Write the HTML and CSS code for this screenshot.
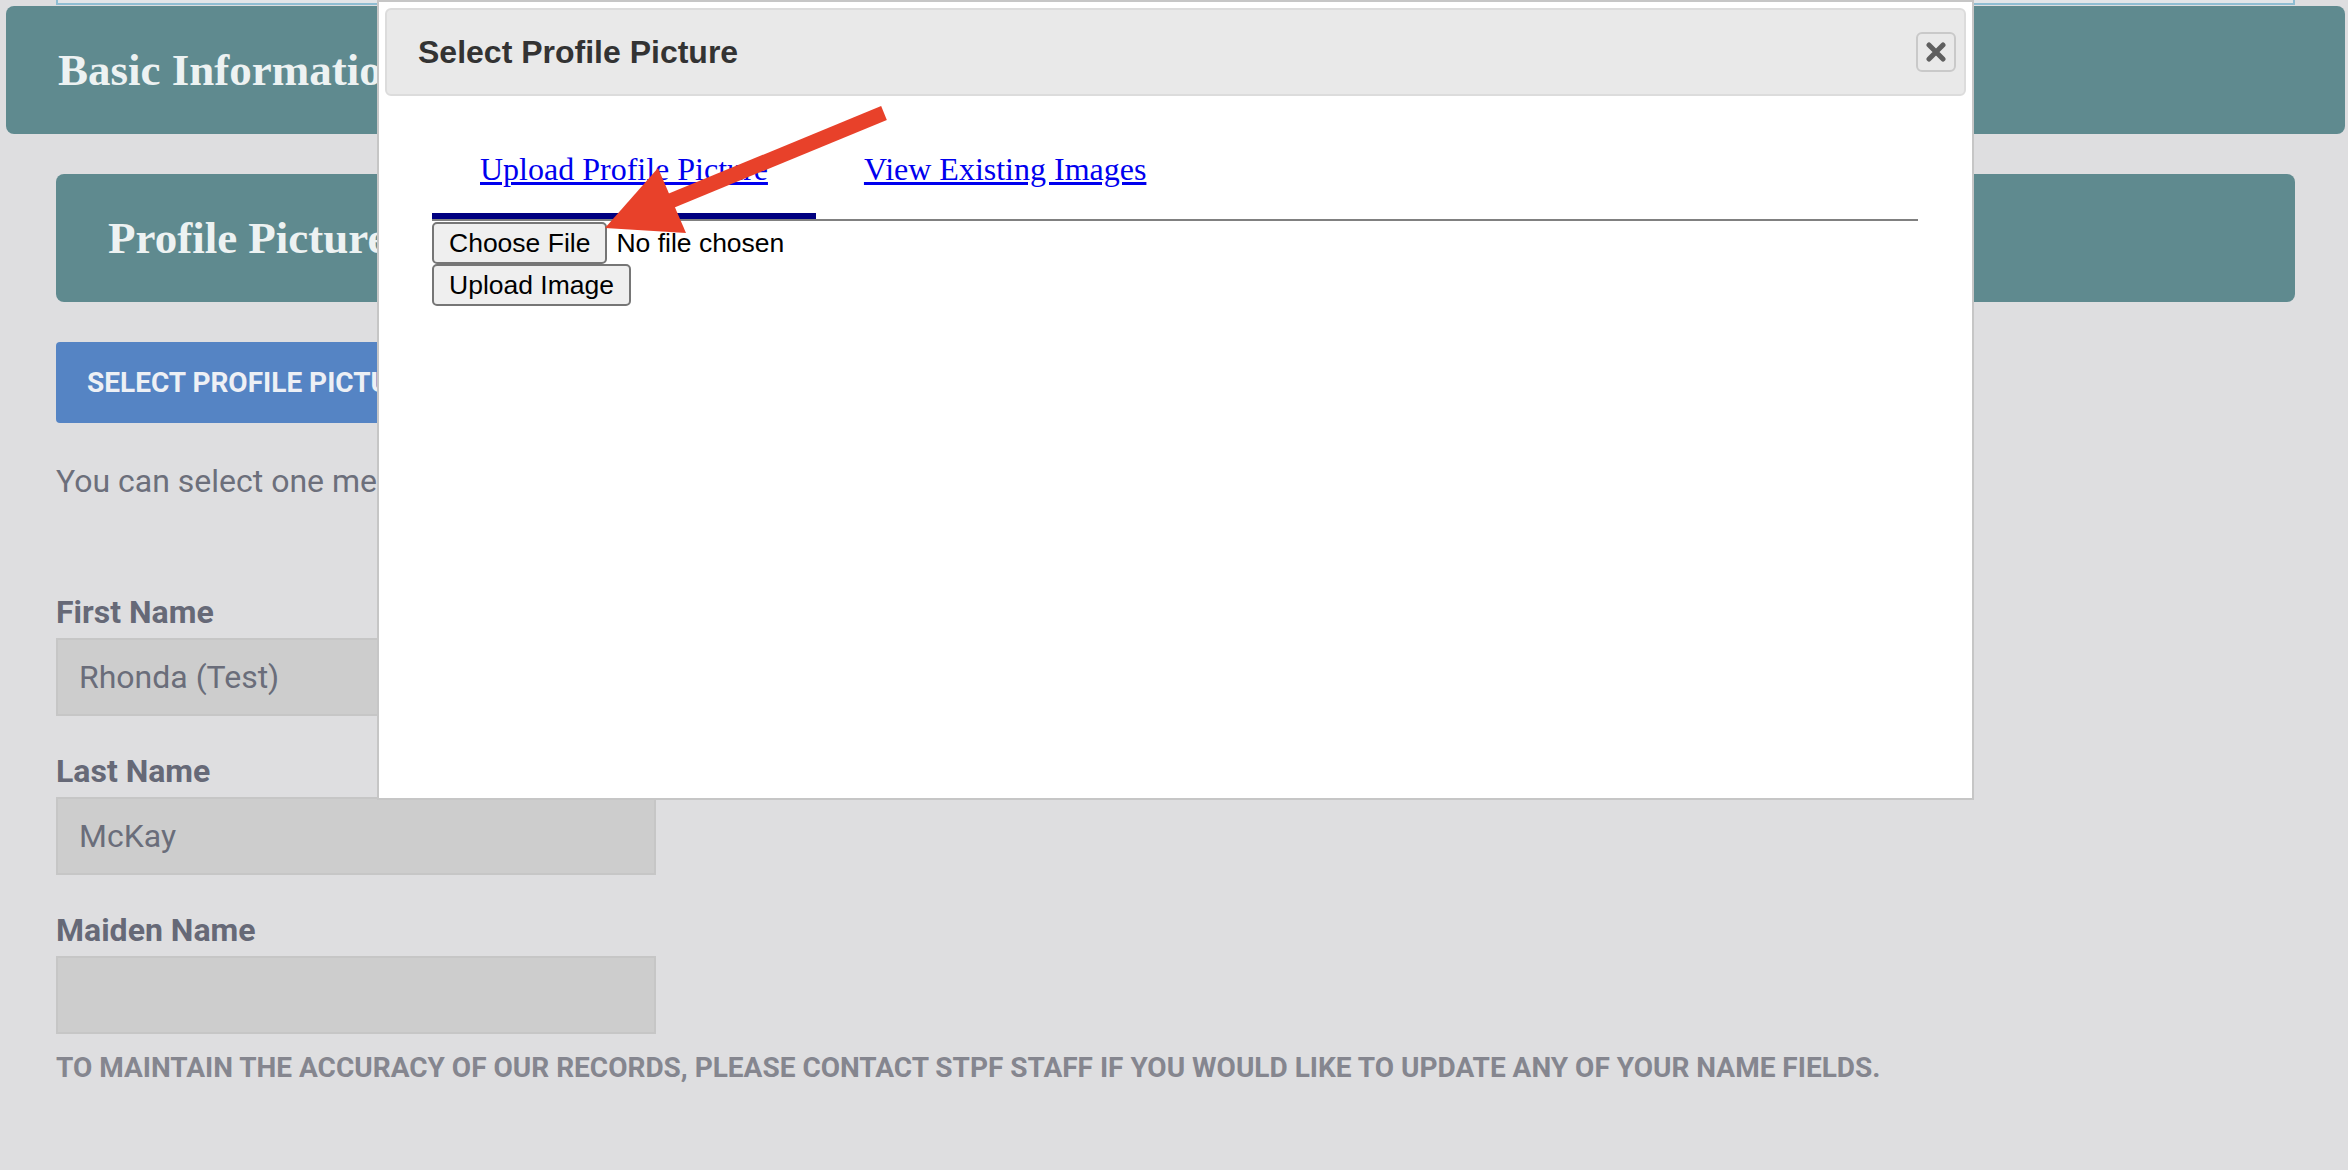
FILE: index.html
```html
<!DOCTYPE html>
<html lang="en">
<head>
<meta charset="utf-8">
<title>Select Profile Picture</title>
<link rel="stylesheet" href="styles.css">
</head>
<body>
<div class="page">
  <div class="topfield"></div>
  <div class="bar bar-basic"><h2 class="bar-title">Basic Information</h2></div>
  <div class="content">
    <div class="bar bar-profile"><h3 class="bar-title">Profile Picture</h3></div>
    <button class="select-btn" type="button">SELECT PROFILE PICTURE</button>
    <p class="hint">You can select one media file to use as your profile picture.</p>

    <div class="field">
      <label class="field-label">First Name</label>
      <div class="field-input">Rhonda (Test)</div>
    </div>
    <div class="field">
      <label class="field-label">Last Name</label>
      <div class="field-input">McKay</div>
    </div>
    <div class="field">
      <label class="field-label">Maiden Name</label>
      <div class="field-input"></div>
    </div>
    <p class="notice">TO MAINTAIN THE ACCURACY OF OUR RECORDS, PLEASE CONTACT STPF STAFF IF YOU WOULD LIKE TO UPDATE ANY OF YOUR NAME FIELDS.</p>
  </div>

  <div class="modal">
    <div class="modal-header">
      <span class="modal-title">Select Profile Picture</span>
      <button class="modal-close" type="button" aria-label="close">
        <svg width="22" height="20" viewBox="0 0 22 20"><path d="M4 3 L18 17 M18 3 L4 17" stroke="#505050" stroke-width="5" stroke-linecap="round" fill="none" opacity="0.9"/></svg>
      </button>
    </div>
    <div class="modal-body">
      <ul class="tabs">
        <li class="tab active"><a href="#">Upload Profile Picture</a></li>
        <li class="tab"><a href="#">View Existing Images</a></li>
      </ul>
      <div class="file-row">
        <button class="native-btn" type="button">Choose File</button>
        <span class="file-status">No file chosen</span>
      </div>
      <div class="upload-row">
        <button class="native-btn" type="button">Upload Image</button>
      </div>
    </div>
  </div>

  <svg class="annotation" width="2348" height="1170" viewBox="0 0 2348 1170">
    <line x1="884" y1="113" x2="668" y2="202" stroke="#e8412a" stroke-width="15"/>
    <polygon points="605,228 658,168 686,233" fill="#e8412a"/>
  </svg>
</div>
</body>
</html>
```

FILE: styles.css
```css
* { box-sizing: border-box; }

html, body {
  margin: 0;
  padding: 0;
}

body {
  background: #dedee0;
  font-family: Roboto, "Liberation Sans", sans-serif;
  width: 2348px;
  height: 1170px;
  overflow: hidden;
}

.page {
  position: relative;
  width: 2348px;
  height: 1170px;
}

.topfield {
  margin: 0 53px 0 56px;
  height: 5px;
  background: #e2e5e8;
  border: 2px solid #8fbdd2;
  border-top: 0;
}

.bar {
  background: #5f8a8f;
  border-radius: 8px;
  height: 128px;
  display: flex;
  align-items: center;
}

.bar-basic {
  margin: 1px 3px 0 6px;
  padding-left: 52px;
}

.bar-title {
  margin: 0;
  font-family: "Liberation Serif", "Times New Roman", serif;
  font-weight: 700;
  font-size: 45px;
  color: #edf2f2;
}

.content {
  padding: 40px 53px 0 56px;
}

.bar-profile {
  padding-left: 52px;
}

.select-btn {
  display: flex;
  align-items: center;
  margin-top: 40px;
  height: 81px;
  padding: 0 31px;
  border: 0;
  border-radius: 4px;
  background: #5584c4;
  color: #edf0f5;
  font-family: Roboto, sans-serif;
  font-weight: 700;
  font-size: 28px;
}

.hint {
  margin: 38px 0 0;
  font-size: 32px;
  line-height: 40px;
  color: #6c6f7b;
}

.field {
  margin-top: 35px;
}

.hint + .field {
  margin-top: 91px;
}

.field-label {
  display: block;
  font-weight: 700;
  font-size: 32px;
  line-height: 40px;
  color: #666977;
  margin-bottom: 6px;
}

.field-input {
  width: 600px;
  height: 78px;
  background: #cdcdcd;
  border: 2px solid #c6c6c6;
  padding: 0 21px;
  display: flex;
  align-items: center;
  font-size: 32px;
  color: #6a6d7a;
}

.notice {
  margin: 16px 0 0;
  font-weight: 700;
  font-size: 28px;
  line-height: 36px;
  color: #85868f;
  white-space: nowrap;
}

/* modal */
.modal {
  position: absolute;
  left: 377px;
  top: 0;
  width: 1597px;
  height: 800px;
  background: #fff;
  border: 2px solid #c6c6c6;
  padding: 6px;
  z-index: 5;
}

.modal-header {
  height: 88px;
  background: #e9e9e9;
  border: 2px solid #dcdcdc;
  border-radius: 6px;
  display: flex;
  align-items: center;
  justify-content: space-between;
  padding: 0 8px 0 31px;
}

.modal-title {
  font-family: "Liberation Sans", Arial, sans-serif;
  font-weight: 700;
  font-size: 32px;
  color: #333;
}

.modal-close {
  width: 40px;
  height: 40px;
  padding: 0;
  border: 2px solid #c9c9c9;
  border-radius: 6px;
  background: #e9e9e9;
  display: flex;
  align-items: center;
  justify-content: center;
}

.modal-body {
  padding: 0 48px 0 47px;
}

.tabs {
  list-style: none;
  margin: 0;
  padding: 0;
  display: flex;
  border-bottom: 2px solid #808080;
}

.tab {
  padding: 55px 48px 25px;
  line-height: 37px;
  border-bottom: 6px solid transparent;
  font-family: "Liberation Serif", "Times New Roman", serif;
  font-size: 32px;
}

.tab.active {
  border-bottom-color: #000080;
}

.tab a {
  color: #0000ee;
  text-decoration: underline;
}

.file-row {
  margin-top: 1px;
  display: flex;
  align-items: center;
  height: 42px;
}

.native-btn {
  height: 42px;
  padding: 0 15px;
  border: 2px solid #767676;
  border-radius: 5px;
  background: #efefef;
  color: #000;
  font-family: "Liberation Sans", Arial, sans-serif;
  font-size: 26.5px;
  line-height: 1;
}

.file-status {
  margin-left: 9px;
  font-family: "Liberation Sans", Arial, sans-serif;
  font-size: 26.5px;
  color: #000;
}

.upload-row {
  display: flex;
}

.annotation {
  position: absolute;
  left: 0;
  top: 0;
  z-index: 10;
  pointer-events: none;
}
```
